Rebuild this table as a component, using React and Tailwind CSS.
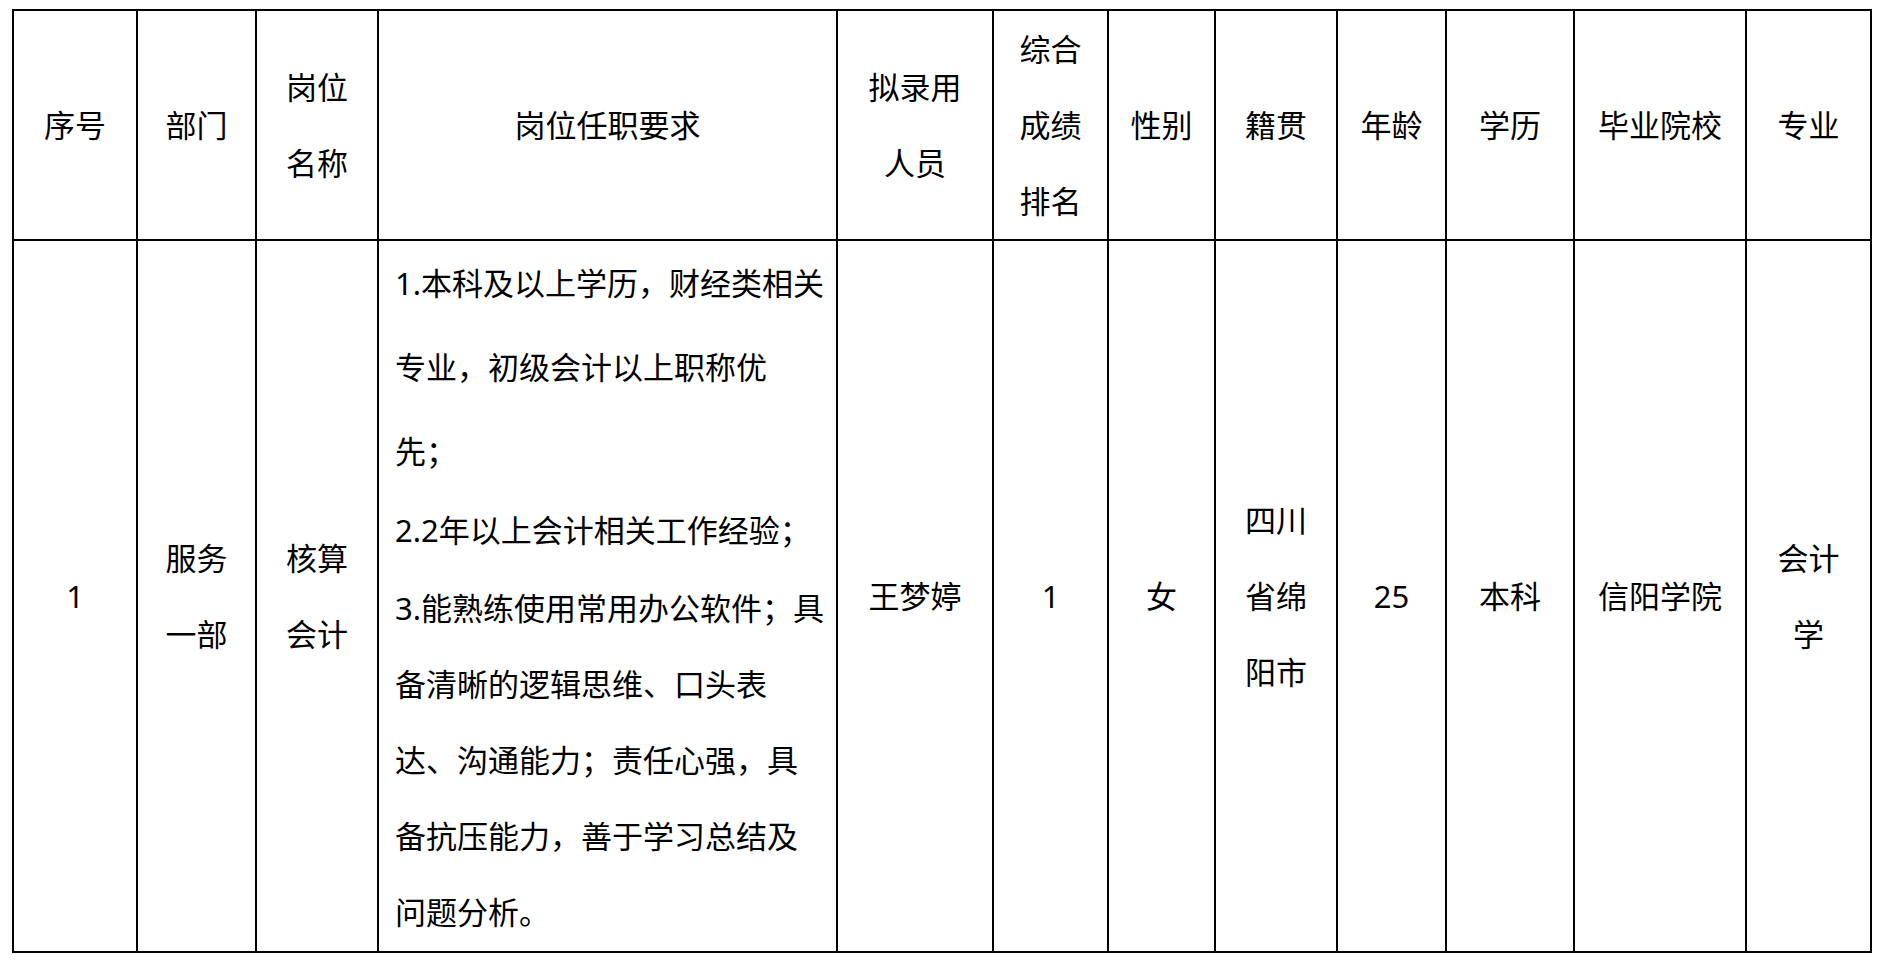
import React from "react";

// 表头与数据
const headers = [
    ["序号"],
    ["部门"],
    ["岗位", "名称"],
    ["岗位任职要求"],
    ["拟录用", "人员"],
    ["综合", "成绩", "排名"],
    ["性别"],
    ["籍贯"],
    ["年龄"],
    ["学历"],
    ["毕业院校"],
    ["专业"],
];

const row = {
    before: [["1"], ["服务", "一部"], ["核算", "会计"]],
    after: [
        ["王梦婷"],
        ["1"],
        ["女"],
        ["四川", "省绵", "阳市"],
        ["25"],
        ["本科"],
        ["信阳学院"],
        ["会计", "学"],
    ],
};

// 岗位任职要求 - 按原表分行
const requirements = [
    { lines: ["1.本科及以上学历，财经类相关", "专业，初级会计以上职称优", "先；"], leading: "leading-[84px]" },
    { lines: ["2.2年以上会计相关工作经验；"], leading: "leading-[74px]" },
    {
        lines: [
            "3.能熟练使用常用办公软件；具",
            "备清晰的逻辑思维、口头表",
            "达、沟通能力；责任心强，具",
            "备抗压能力，善于学习总结及",
            "问题分析。",
        ],
        leading: "leading-[76px] mt-[3px]",
    },
];

const colWidths = [
    "w-[124px]",
    "w-[119px]",
    "w-[122px]",
    "w-[459px]",
    "w-[156px]",
    "w-[115px]",
    "w-[107px]",
    "w-[122px]",
    "w-[109px]",
    "w-[128px]",
    "w-[172px]",
    "w-[125px]",
];

const Cell = ({ lines }) => (
    <td className="border-2 border-black text-center align-middle p-0 leading-[76px]">
        {lines.map((l, i) => (
            <div key={i} className="whitespace-nowrap">{l}</div>
        ))}
    </td>
);

export default function App() {
    return (
        <div className="min-h-screen bg-white pt-[9px] pl-[12px] text-black text-[31px] font-[family-name:'Noto_Sans','Noto_Sans_CJK_SC',sans-serif]">
            <table className="table-fixed border-collapse w-[1860px]">
                <colgroup>
                    {colWidths.map((w, i) => (
                        <col key={i} className={w} />
                    ))}
                </colgroup>
                <thead>
                    <tr className="h-[229px]">
                        {headers.map((h, i) => (
                            <th key={i} className="border-2 border-black text-center align-middle p-0 font-normal leading-[76px]">
                                {h.map((l, j) => (
                                    <div key={j} className="whitespace-nowrap">{l}</div>
                                ))}
                            </th>
                        ))}
                    </tr>
                </thead>
                <tbody>
                    <tr className="h-[712px]">
                        {row.before.map((c, i) => (
                            <Cell key={i} lines={c} />
                        ))}

                        {/* 岗位任职要求 */}
                        <td className="border-2 border-black align-top pt-0 pl-[16px] pr-0 text-left">
                            {requirements.map((p, i) => (
                                <div key={i} className={p.leading}>
                                    {p.lines.map((l, j) => (
                                        <div key={j} className="whitespace-nowrap">{l}</div>
                                    ))}
                                </div>
                            ))}
                        </td>

                        {row.after.map((c, i) => (
                            <Cell key={i} lines={c} />
                        ))}
                    </tr>
                </tbody>
            </table>
        </div>
    );
}
